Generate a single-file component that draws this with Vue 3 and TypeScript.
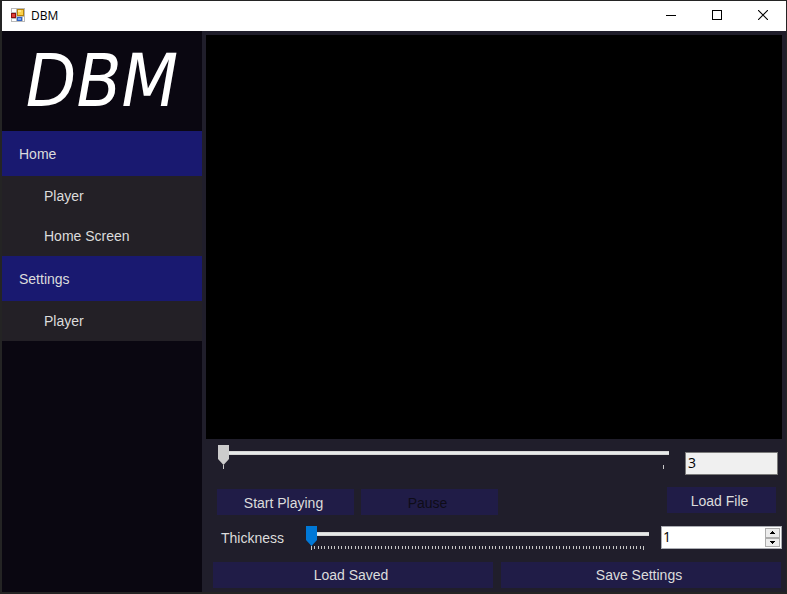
<script setup lang="ts">
import { ref } from 'vue'

interface MenuItem {
  label: string
}
interface MenuGroup {
  title: string
  items: MenuItem[]
}

const groups: MenuGroup[] = [
  { title: 'Home', items: [{ label: 'Player' }, { label: 'Home Screen' }] },
  { title: 'Settings', items: [{ label: 'Player' }] },
]

const position = ref(0)
const frame = ref('3')
const thickness = ref(1)
const playing = ref(false)

const tickCount = 100
const ticks = Array.from({ length: tickCount }, (_, i) => ({
  x: `${(i * 100) / (tickCount - 1)}%`,
  height: i === 0 || i === tickCount - 1 ? 4 : 3,
}))

function step(delta: number) {
  thickness.value = Math.min(100, Math.max(1, thickness.value + delta))
}
</script>

<template>
  <div class="desktop">
    <div class="window">
      <header class="titlebar">
        <svg class="app-icon" width="14" height="14" viewBox="0 0 14 14" shape-rendering="crispEdges" aria-hidden="true">
          <rect width="14" height="14" fill="#b9b9b9" />
          <path d="M1 1h4v3H1zM1 11h4v2H1zM12 9h1v4h-1z" fill="#fff" />
          <rect x="6" y="1" width="7" height="7" fill="#b98508" />
          <rect x="7" y="2" width="5" height="5" fill="#fbd14b" />
          <rect x="7" y="2" width="3" height="2" fill="#ffe68c" />
          <rect x="0" y="5" width="5" height="5" fill="#8c1010" />
          <rect x="1" y="6" width="3" height="3" fill="#e0403a" />
          <rect x="6" y="9" width="5" height="4" fill="#2f62c4" />
          <rect x="7" y="10" width="3" height="2" fill="#79a5f2" />
        </svg>
        <span class="title">DBM</span>
        <button class="caption" type="button" aria-label="Minimize">
          <svg width="10" height="10" viewBox="0 0 10 10" shape-rendering="crispEdges"><rect y="5" width="10" height="1" /></svg>
        </button>
        <button class="caption" type="button" aria-label="Maximize">
          <svg width="10" height="10" viewBox="0 0 10 10" shape-rendering="crispEdges"><path d="M0 0h10v10H0zM1 1v8h8V1z" fill-rule="evenodd" /></svg>
        </button>
        <button class="caption" type="button" aria-label="Close">
          <svg width="10" height="10" viewBox="0 0 10 10"><path d="M0 0l10 10M10 0L0 10" stroke="#000" stroke-width="1.1" /></svg>
        </button>
      </header>

      <div class="body">
        <aside class="sidebar">
          <div class="logo">DBM</div>
          <nav>
            <section v-for="group in groups" :key="group.title">
              <button class="group" type="button">{{ group.title }}</button>
              <button v-for="item in group.items" :key="item.label" class="item" type="button">{{ item.label }}</button>
            </section>
          </nav>
        </aside>

        <main class="main">
          <div class="screen"></div>

          <div class="controls">
            <div class="row seek-row">
              <div class="slider seek">
                <input v-model.number="position" type="range" min="0" max="100" aria-label="Position" />
                <svg class="ticks" height="4" shape-rendering="crispEdges" aria-hidden="true">
                  <rect x="0" width="1" height="4" />
                  <rect x="100%" width="1" height="4" />
                </svg>
              </div>
              <input v-model="frame" class="frame" type="text" readonly aria-label="Frame" />
            </div>

            <div class="row play-row">
              <button class="btn play" type="button" @click="playing = true">Start Playing</button>
              <button class="btn play" type="button" :disabled="!playing" @click="playing = false">Pause</button>
              <button class="btn file" type="button">Load File</button>
            </div>

            <div class="row thick-row">
              <label class="thick-label" for="thickness">Thickness</label>
              <div class="slider thick">
                <input id="thickness" v-model.number="thickness" type="range" min="1" max="100" />
                <svg class="ticks" height="4" shape-rendering="crispEdges" aria-hidden="true">
                  <rect v-for="tick in ticks" :key="tick.x" :x="tick.x" width="1" :height="tick.height" />
                </svg>
              </div>
              <div class="spinner">
                <input v-model.number="thickness" type="number" min="1" max="100" aria-label="Thickness value" />
                <div class="spin-buttons">
                  <button type="button" aria-label="Increase" @click="step(1)">
                    <svg width="5" height="3" viewBox="0 0 5 3" shape-rendering="crispEdges"><path d="M2 0h1v1h1v1h1v1H0V2h1V1h1z" /></svg>
                  </button>
                  <button type="button" aria-label="Decrease" @click="step(-1)">
                    <svg width="5" height="3" viewBox="0 0 5 3" shape-rendering="crispEdges"><path d="M0 0h5v1H4v1H3v1H2V2H1V1H0z" /></svg>
                  </button>
                </div>
              </div>
            </div>

            <div class="row save-row">
              <button class="btn wide" type="button">Load Saved</button>
              <button class="btn wide" type="button">Save Settings</button>
            </div>
          </div>
        </main>
      </div>
    </div>
  </div>
</template>

<style>
body {
  background: #242424;
}
</style>

<style scoped>
.desktop {
  box-sizing: border-box;
  display: flex;
  min-height: 100vh;
  padding: 1px 1px 2px 2px;
  background: #242424;
  font-family: "Liberation Sans", Arial, sans-serif;
  font-size: 14px;
  line-height: 16px;
}
button,
input {
  box-sizing: border-box;
  margin: 0;
  padding: 0;
  border: 0;
  border-radius: 0;
  font: inherit;
}
.window {
  flex: 1;
  min-width: 0;
  display: flex;
  flex-direction: column;
}
.titlebar {
  display: flex;
  align-items: center;
  height: 30px;
  padding-left: 9px;
  background: #fff;
}
.app-icon {
  margin-bottom: 2px;
}
.title {
  flex: 1;
  margin-left: 6px;
  color: #000;
  font-family: "Open Sans", "Noto Sans", sans-serif;
  font-size: 12px;
}
.caption {
  display: flex;
  align-items: center;
  justify-content: center;
  width: 46px;
  height: 30px;
  padding-bottom: 2px;
  background: #fff;
}
.body {
  flex: 1;
  display: flex;
}
.sidebar {
  width: 200px;
  flex: none;
  background: #0a0711;
}
.logo {
  height: 100px;
  color: #fff;
  font-family: "Liberation Sans Narrow", "DejaVu Sans Condensed", sans-serif;
  font-size: 73px;
  font-style: italic;
  line-height: 100px;
  text-align: center;
}
.group,
.item {
  display: block;
  width: 100%;
  color: #dcdcdc;
  text-align: left;
}
.group {
  height: 45px;
  padding-left: 17px;
  background: #191970;
}
.item {
  height: 40px;
  padding-left: 42px;
  background: #232026;
}
.main {
  flex: 1;
  min-width: 0;
  display: flex;
  flex-direction: column;
  padding: 4px;
  background: #201e2b;
}
.screen {
  flex: 1;
  background: #000;
}
.controls {
  padding-top: 6px;
}
.row {
  display: flex;
}
.seek-row {
  align-items: flex-end;
  gap: 16px;
  height: 30px;
  padding: 0 4px 0 12px;
}
.slider {
  flex: 1;
  min-width: 0;
  height: 24px;
}
.seek-row .slider {
  align-self: flex-start;
}
.slider input {
  display: block;
  width: 100%;
  height: 20px;
  appearance: none;
  background: transparent;
}
.slider input::-webkit-slider-runnable-track {
  height: 20px;
  background: linear-gradient(#d6d6d6 0 1px, #e7eaea 1px 3px, #d6d6d6 3px) 0 6px / 100% 4px no-repeat;
}
.slider input::-webkit-slider-thumb {
  appearance: none;
  width: 11px;
  height: 20px;
  background: #ccc;
  clip-path: polygon(0 0, 100% 0, 100% 70%, 50% 100%, 0 70%);
}
.thick input::-webkit-slider-thumb {
  background: #0078d7;
}
.ticks {
  display: block;
  width: calc(100% - 11px);
  margin-left: 5px;
  overflow: visible;
  fill: #c8c8c8;
}
.frame {
  width: 93px;
  height: 23px;
  padding: 0 2px 2px;
  border: 1px solid #7a7a7a;
  background: #f0f0f0;
  color: #000;
  font-family: "Open Sans", "Noto Sans", sans-serif;
}
.play-row {
  align-items: flex-end;
  gap: 7px;
  height: 40px;
  padding: 0 6px 0 11px;
}
.btn {
  height: 26px;
  padding: 2px 4px 0 0;
  background: #201c47;
  color: #dcdcdc;
  text-align: center;
}
.btn:disabled {
  color: #0e0c18;
}
.play {
  width: 137px;
}
.file {
  width: 109px;
  margin-left: auto;
  margin-bottom: 2px;
}
.thick-row {
  align-items: flex-start;
  gap: 12px;
  padding-top: 11px;
}
.thick-label {
  width: 73px;
  padding: 4px 0 0 15px;
  color: #dcdcdc;
}
.spinner {
  box-sizing: border-box;
  display: flex;
  width: 121px;
  height: 23px;
  padding: 1px;
  border: 1px solid #abadb3;
  background: #fff;
}
.spinner input {
  flex: 1;
  min-width: 0;
  height: 17px;
  background: #fff;
  color: #000;
  font-family: "Open Sans", "Noto Sans", sans-serif;
  appearance: textfield;
}
.spinner input::-webkit-inner-spin-button {
  appearance: none;
}
.spin-buttons {
  display: flex;
  flex-direction: column;
  width: 15px;
}
.spin-buttons button {
  flex: 1;
  display: flex;
  align-items: center;
  justify-content: center;
  border: 1px solid #acacac;
  background: #ececec;
}
.save-row {
  gap: 8px;
  padding: 12px 1px 0 7px;
}
.wide {
  flex: 1;
  padding-top: 0;
}
</style>
